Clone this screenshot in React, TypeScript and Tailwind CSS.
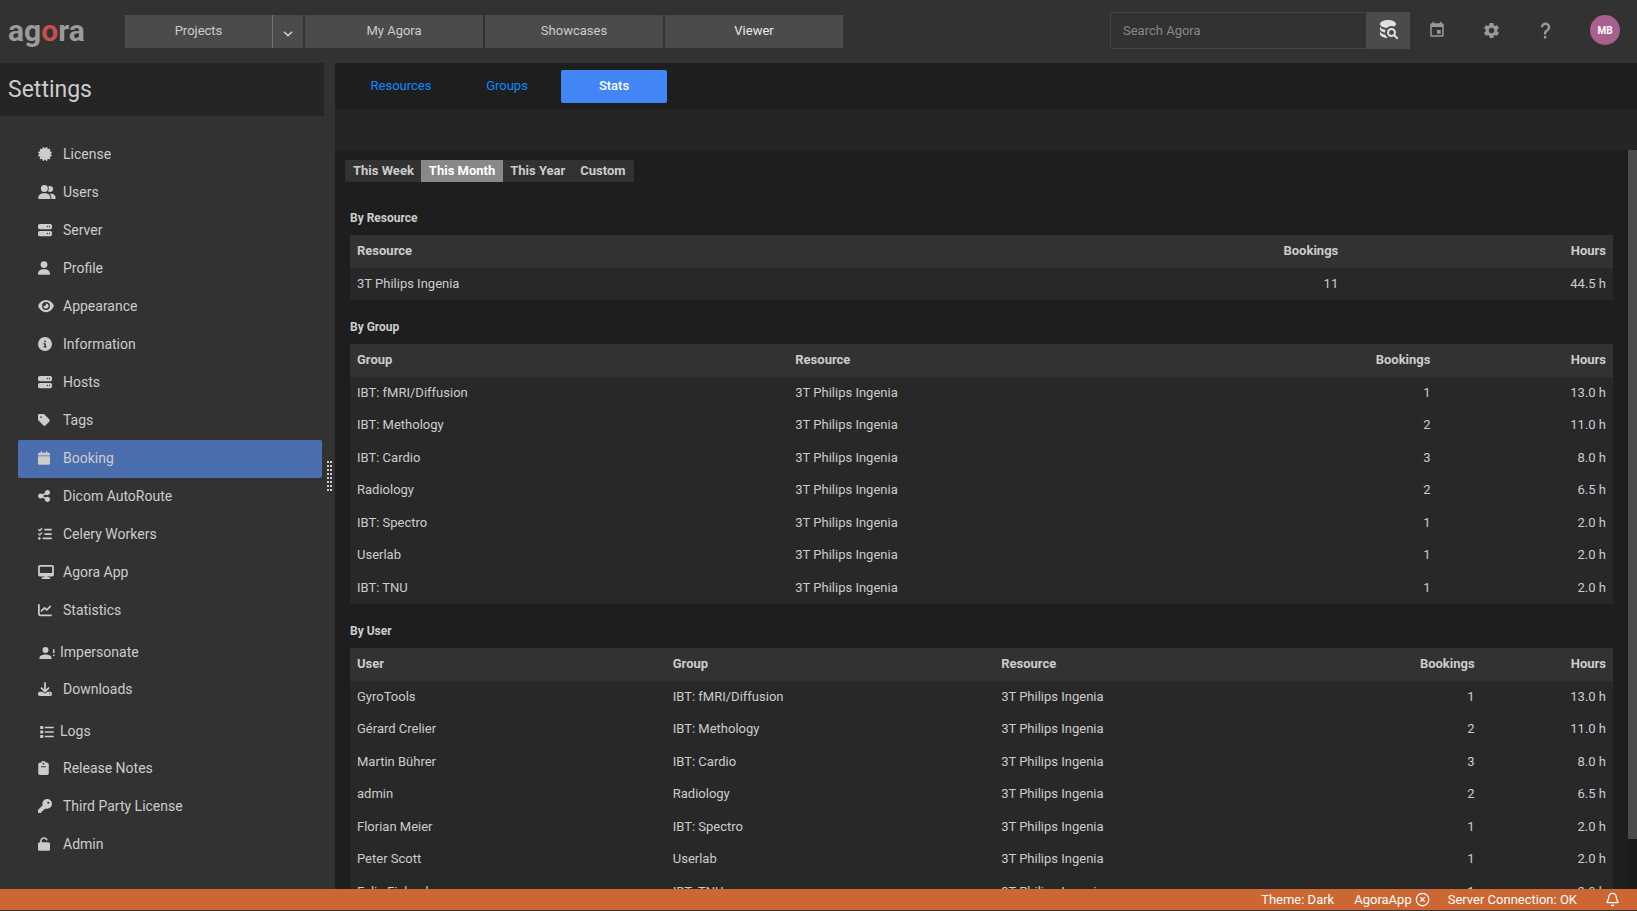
import React from "react";
import type { ReactNode } from "react";
import {
  FaCalendar,
  FaCertificate,
  FaChartLine,
  FaCircleInfo,
  FaClipboard,
  FaDesktop,
  FaDownload,
  FaEye,
  FaKey,
  FaListCheck,
  FaServer,
  FaShareNodes,
  FaTag,
  FaUnlock,
  FaUser,
  FaUserGroup,
} from "react-icons/fa6";
import { MdEvent, MdSettings } from "react-icons/md";
import { Bell, ChevronDown, CircleX } from "lucide-react";

type MenuItem = { label: string; icon: ReactNode; tall?: boolean };

function AccountAlert() {
  return (
    <svg viewBox="0 0 24 24" className="size-[18px] fill-current" aria-hidden="true">
      <path d="M10,4A4,4 0 0,1 14,8A4,4 0 0,1 10,12A4,4 0 0,1 6,8A4,4 0 0,1 10,4M10,14C14.42,14 18,15.79 18,18V20H2V18C2,15.79 5.58,14 10,14M20,12V7H22V12H20M20,16V14H22V16H20Z" />
    </svg>
  );
}

function BulletedList() {
  return (
    <svg viewBox="0 0 24 24" className="size-[18px] fill-current" aria-hidden="true">
      <path d="M3,4H7V8H3V4M9,5V7H21V5H9M3,10H7V14H3V10M9,11V13H21V11H9M3,16H7V20H3V16M9,17V19H21V17H9" />
    </svg>
  );
}

function QuestionMark() {
  return (
    <svg viewBox="0 0 24 24" className="size-[19px] fill-current" aria-hidden="true">
      <path d="M10,19H13V22H10V19M12,2C17.35,2.22 19.68,7.62 16.5,11.67C15.67,12.67 14.33,13.33 13.67,14.17C13,15 13,16 13,17H10C10,15.33 10,13.92 10.67,12.92C11.33,11.92 12.67,11.33 13.5,10.67C15.92,8.43 15.32,5.26 12,5A3,3 0 0,0 9,8H6A6,6 0 0,1 12,2Z" />
    </svg>
  );
}

function DatabaseSearch() {
  return (
    <svg viewBox="0 0 24 24" className="size-6 fill-current" aria-hidden="true">
      <path d="M18.68,12.32C16.92,10.56 14.07,10.57 12.32,12.33C10.56,14.09 10.56,16.94 12.32,18.69C13.81,20.17 16.11,20.43 17.89,19.32L21,22.39L22.39,21L19.3,17.89C20.43,16.12 20.17,13.8 18.68,12.32M17.27,17.27C16.29,18.25 14.71,18.24 13.73,17.27C12.76,16.29 12.76,14.71 13.74,13.73C14.71,12.76 16.29,12.76 17.27,13.73C18.24,14.71 18.24,16.29 17.27,17.27M10.9,20.1C10.25,19.44 9.74,18.65 9.42,17.78C6.27,17.25 4,15.76 4,14V17C4,19.21 7.58,21 12,21V21C11.6,20.74 11.23,20.44 10.9,20.1M4,9V12C4,13.68 6.07,15.12 9,15.7C9,15.63 9,15.57 9,15.5C9,14.57 9.2,13.65 9.58,12.81C6.34,12.3 4,10.79 4,9M12,3C7.58,3 4,4.79 4,7C4,9 7,10.68 10.85,11H10.9C12.1,9.74 13.76,9 15.5,9C16.41,9 17.31,9.19 18.14,9.56C19.17,9.09 19.87,8.12 20,7C20,4.79 16.42,3 12,3Z" />
    </svg>
  );
}

const menu: MenuItem[] = [
  { label: "License", icon: <FaCertificate className="w-[14px]" /> },
  { label: "Users", icon: <FaUserGroup className="w-[18px]" /> },
  { label: "Server", icon: <FaServer className="w-[14px]" /> },
  { label: "Profile", icon: <FaUser className="w-[12px]" /> },
  { label: "Appearance", icon: <FaEye className="w-[16px]" /> },
  { label: "Information", icon: <FaCircleInfo className="w-[14px]" /> },
  { label: "Hosts", icon: <FaServer className="w-[14px]" /> },
  { label: "Tags", icon: <FaTag className="w-[12px]" /> },
  { label: "Booking", icon: <FaCalendar className="w-[12px]" /> },
  { label: "Dicom AutoRoute", icon: <FaShareNodes className="w-[12px]" /> },
  { label: "Celery Workers", icon: <FaListCheck className="w-[14px]" /> },
  { label: "Agora App", icon: <FaDesktop className="w-[16px]" /> },
  { label: "Statistics", icon: <FaChartLine className="w-[14px]" /> },
  { label: "Impersonate", icon: <AccountAlert />, tall: true },
  { label: "Downloads", icon: <FaDownload className="w-[14px]" /> },
  { label: "Logs", icon: <BulletedList />, tall: true },
  { label: "Release Notes", icon: <FaClipboard className="w-[11px]" /> },
  { label: "Third Party License", icon: <FaKey className="w-[14px]" /> },
  { label: "Admin", icon: <FaUnlock className="w-[12px]" /> },
];

const scanner = "3T Philips Ingenia";

const byGroup = [
  ["IBT: fMRI/Diffusion", scanner, "1", "13.0 h"],
  ["IBT: Methology", scanner, "2", "11.0 h"],
  ["IBT: Cardio", scanner, "3", "8.0 h"],
  ["Radiology", scanner, "2", "6.5 h"],
  ["IBT: Spectro", scanner, "1", "2.0 h"],
  ["Userlab", scanner, "1", "2.0 h"],
  ["IBT: TNU", scanner, "1", "2.0 h"],
];

const byUser = [
  ["GyroTools", "IBT: fMRI/Diffusion", scanner, "1", "13.0 h"],
  ["Gérard Crelier", "IBT: Methology", scanner, "2", "11.0 h"],
  ["Martin Bührer", "IBT: Cardio", scanner, "3", "8.0 h"],
  ["admin", "Radiology", scanner, "2", "6.5 h"],
  ["Florian Meier", "IBT: Spectro", scanner, "1", "2.0 h"],
  ["Peter Scott", "Userlab", scanner, "1", "2.0 h"],
  ["Felix Eichenberger", "IBT: TNU", scanner, "1", "2.0 h"],
];

function StatsTable({
  title,
  columns,
  widths,
  rows,
}: {
  title: string;
  columns: string[];
  widths: string[];
  rows: string[][];
}) {
  const align = (i: number) => (i >= columns.length - 2 ? "text-right" : "text-left");
  return (
    <section>
      <h2 className="mb-2 text-xs leading-normal font-bold">{title}</h2>
      <table className="w-full table-fixed text-[13px] leading-normal">
        <colgroup>
          {widths.map((w, i) => (
            <col key={i} className={w} />
          ))}
        </colgroup>
        <thead className="bg-[#323232]">
          <tr>
            {columns.map((c, i) => (
              <th key={c} scope="col" className={`px-[7px] pt-[6px] pb-[7px] font-bold ${align(i)}`}>
                {c}
              </th>
            ))}
          </tr>
        </thead>
        <tbody className="bg-[#282828]">
          {rows.map((row) => (
            <tr key={row[0]}>
              {row.map((cell, i) => (
                <td key={i} className={`px-[7px] pt-[6px] pb-[7px] ${align(i)}`}>
                  {cell}
                </td>
              ))}
            </tr>
          ))}
        </tbody>
      </table>
    </section>
  );
}

function TopBar() {
  const nav = "h-[33px] bg-[#4b4b4b] pb-[2px]";
  return (
    <header className="flex h-[63px] shrink-0 items-start bg-[#323232] pr-[17px] pl-2">
      <a href="#home" className="mt-[15px] w-[117px] text-[30px] leading-8 font-bold text-[#9b9b9b]" aria-label="agora">
        ag<span className="text-[#c94f4a]">o</span>ra
      </a>
      <nav className="mt-[15px] flex gap-[2px] text-[13px]">
        <div className="flex">
          <button className={`${nav} w-[147px]`}>Projects</button>
          <button className="flex h-[33px] w-[31px] items-center justify-center border-l border-[#6c757d] bg-[#4b4b4b] pt-1" aria-label="More projects">
            <ChevronDown className="size-[14px]" strokeWidth={3} />
          </button>
        </div>
        <button className={`${nav} w-[178px]`}>My Agora</button>
        <button className={`${nav} w-[178px]`}>Showcases</button>
        <button className={`${nav} w-[178px] text-[#e8e8e8]`}>Viewer</button>
      </nav>
      <form className="mt-3 ml-auto flex h-[37px]" onSubmit={(e) => e.preventDefault()}>
        <input
          type="search"
          aria-label="Search Agora"
          placeholder="Search Agora"
          className="w-[256px] rounded-l-xs border border-r-0 border-[#444444] bg-transparent px-3 text-[13px] outline-none placeholder:text-[#888888]"
        />
        <button className="flex w-11 items-center justify-center bg-[#4b4b4b] pb-1 text-[#e0e0e0]" aria-label="Search">
          <DatabaseSearch />
        </button>
      </form>
      <div className="mt-3 flex h-[37px] items-center pb-px text-[#999999]">
        <button className="flex w-[54px] justify-center" aria-label="Calendar">
          <MdEvent className="size-[18px]" />
        </button>
        <button className="flex w-[54px] justify-center" aria-label="Settings">
          <MdSettings className="size-[19px]" />
        </button>
        <button className="flex w-[54px] justify-center" aria-label="Help">
          <QuestionMark />
        </button>
      </div>
      <button className="mt-[15px] ml-[18px] size-[30px] rounded-full bg-[#a8608f] text-[10px] font-bold text-white" aria-label="Account MB">
        MB
      </button>
    </header>
  );
}

function Sidebar() {
  return (
    <aside className="flex w-[335px] shrink-0 bg-[#323232]">
      <div className="w-[324px]">
        <h1 className="flex h-[53px] items-center bg-[#252525] pt-[2px] pl-2 text-[23px]">Settings</h1>
        <nav className="mt-5 mr-[2px] ml-[18px] flex flex-col text-sm">
          {menu.map((item) => (
            <a
              key={item.label}
              href={`#${item.label}`}
              className={`flex items-center rounded-xs pl-5 ${item.tall ? "h-[41px] pt-[2px]" : "h-[38px] pb-[2px]"} ${
                item.label === "Booking" ? "bg-[#4b6eaf]" : ""
              }`}
            >
              <span className={`flex shrink-0 ${item.tall ? "w-[22px] pt-[3px]" : "w-[25px]"}`}>{item.icon}</span>
              {item.label}
            </a>
          ))}
        </nav>
      </div>
      <div className="flex w-[11px] cursor-col-resize items-center justify-center" role="separator" aria-orientation="vertical" aria-label="Resize sidebar">
        <svg viewBox="0 0 5 30" className="h-[30px] w-[5px] fill-[#d0d0d0]" aria-hidden="true">
          {[0, 4, 8, 12, 16, 20, 24, 28].map((y) => (
            <path key={y} d={`M0 ${y}h2v2h-2zM3 ${y}h2v2h-2z`} />
          ))}
        </svg>
      </div>
    </aside>
  );
}

function Main() {
  const seg = "h-[22px] px-2 pb-px";
  return (
    <main className="flex min-w-0 flex-1 flex-col bg-[#1e1e1e]">
      <div className="flex h-[46px] shrink-0 items-center pt-px pl-[14px] text-[13px] text-[#0a8cff]">
        <button className="h-[33px] w-[104px] pb-px">Resources</button>
        <button className="h-[33px] w-[108px] pb-px">Groups</button>
        <button className="h-[33px] w-[106px] rounded-xs bg-[#4285f4] pb-px font-medium text-white">Stats</button>
      </div>
      <div className="h-[41px] shrink-0 bg-[#252525]" />
      <div className="flex min-h-0 flex-1">
        <div className="min-w-0 flex-1 overflow-y-auto pt-[10px] pr-[15px] pl-[10px] [scrollbar-width:none]">
          <div className="flex w-fit overflow-hidden rounded-xs bg-[#323232] text-[13px] leading-5 font-bold">
            <button className={seg}>This Week</button>
            <button className={`${seg} -ml-px bg-[#888888] text-white`}>This Month</button>
            <button className={`${seg} -ml-px`}>This Year</button>
            <button className={`${seg} -ml-px`}>Custom</button>
          </div>
          <div className="mt-[27px] flex flex-col gap-[18px] pl-[5px]">
            <StatsTable
              title="By Resource"
              columns={["Resource", "Bookings", "Hours"]}
              widths={["w-[50%]", "w-[28.8%]", "w-[21.2%]"]}
              rows={[[scanner, "11", "44.5 h"]]}
            />
            <StatsTable
              title="By Group"
              columns={["Group", "Resource", "Bookings", "Hours"]}
              widths={["w-[34.7%]", "w-[34.7%]", "w-[16.7%]", "w-[13.9%]"]}
              rows={byGroup}
            />
            <StatsTable
              title="By User"
              columns={["User", "Group", "Resource", "Bookings", "Hours"]}
              widths={["w-[25%]", "w-[26%]", "w-[25%]", "w-[13.6%]", "w-[10.4%]"]}
              rows={byUser}
            />
          </div>
        </div>
        <div className="w-[9px] shrink-0 bg-[#1a1a1a]">
          <div className="h-[93.2%] bg-[#4c4c4c]" />
        </div>
      </div>
    </main>
  );
}

export default function App() {
  return (
    <div className="flex h-screen flex-col bg-[#323232] font-[Roboto,sans-serif] text-[#cccccc]">
      <TopBar />
      <div className="flex min-h-0 flex-1">
        <Sidebar />
        <Main />
      </div>
      <footer className="mb-px flex h-[21px] shrink-0 items-center justify-end bg-[#cc6633] pr-[17px] text-[13px] text-white">
        <span>Theme: Dark</span>
        <button className="ml-5 flex items-center gap-[3px]">
          AgoraApp
          <CircleX className="size-[15px]" strokeWidth={2} />
        </button>
        <span className="ml-[18px]">Server Connection: OK</span>
        <button className="ml-7" aria-label="Notifications">
          <Bell className="size-[15px]" strokeWidth={2} />
        </button>
      </footer>
    </div>
  );
}
